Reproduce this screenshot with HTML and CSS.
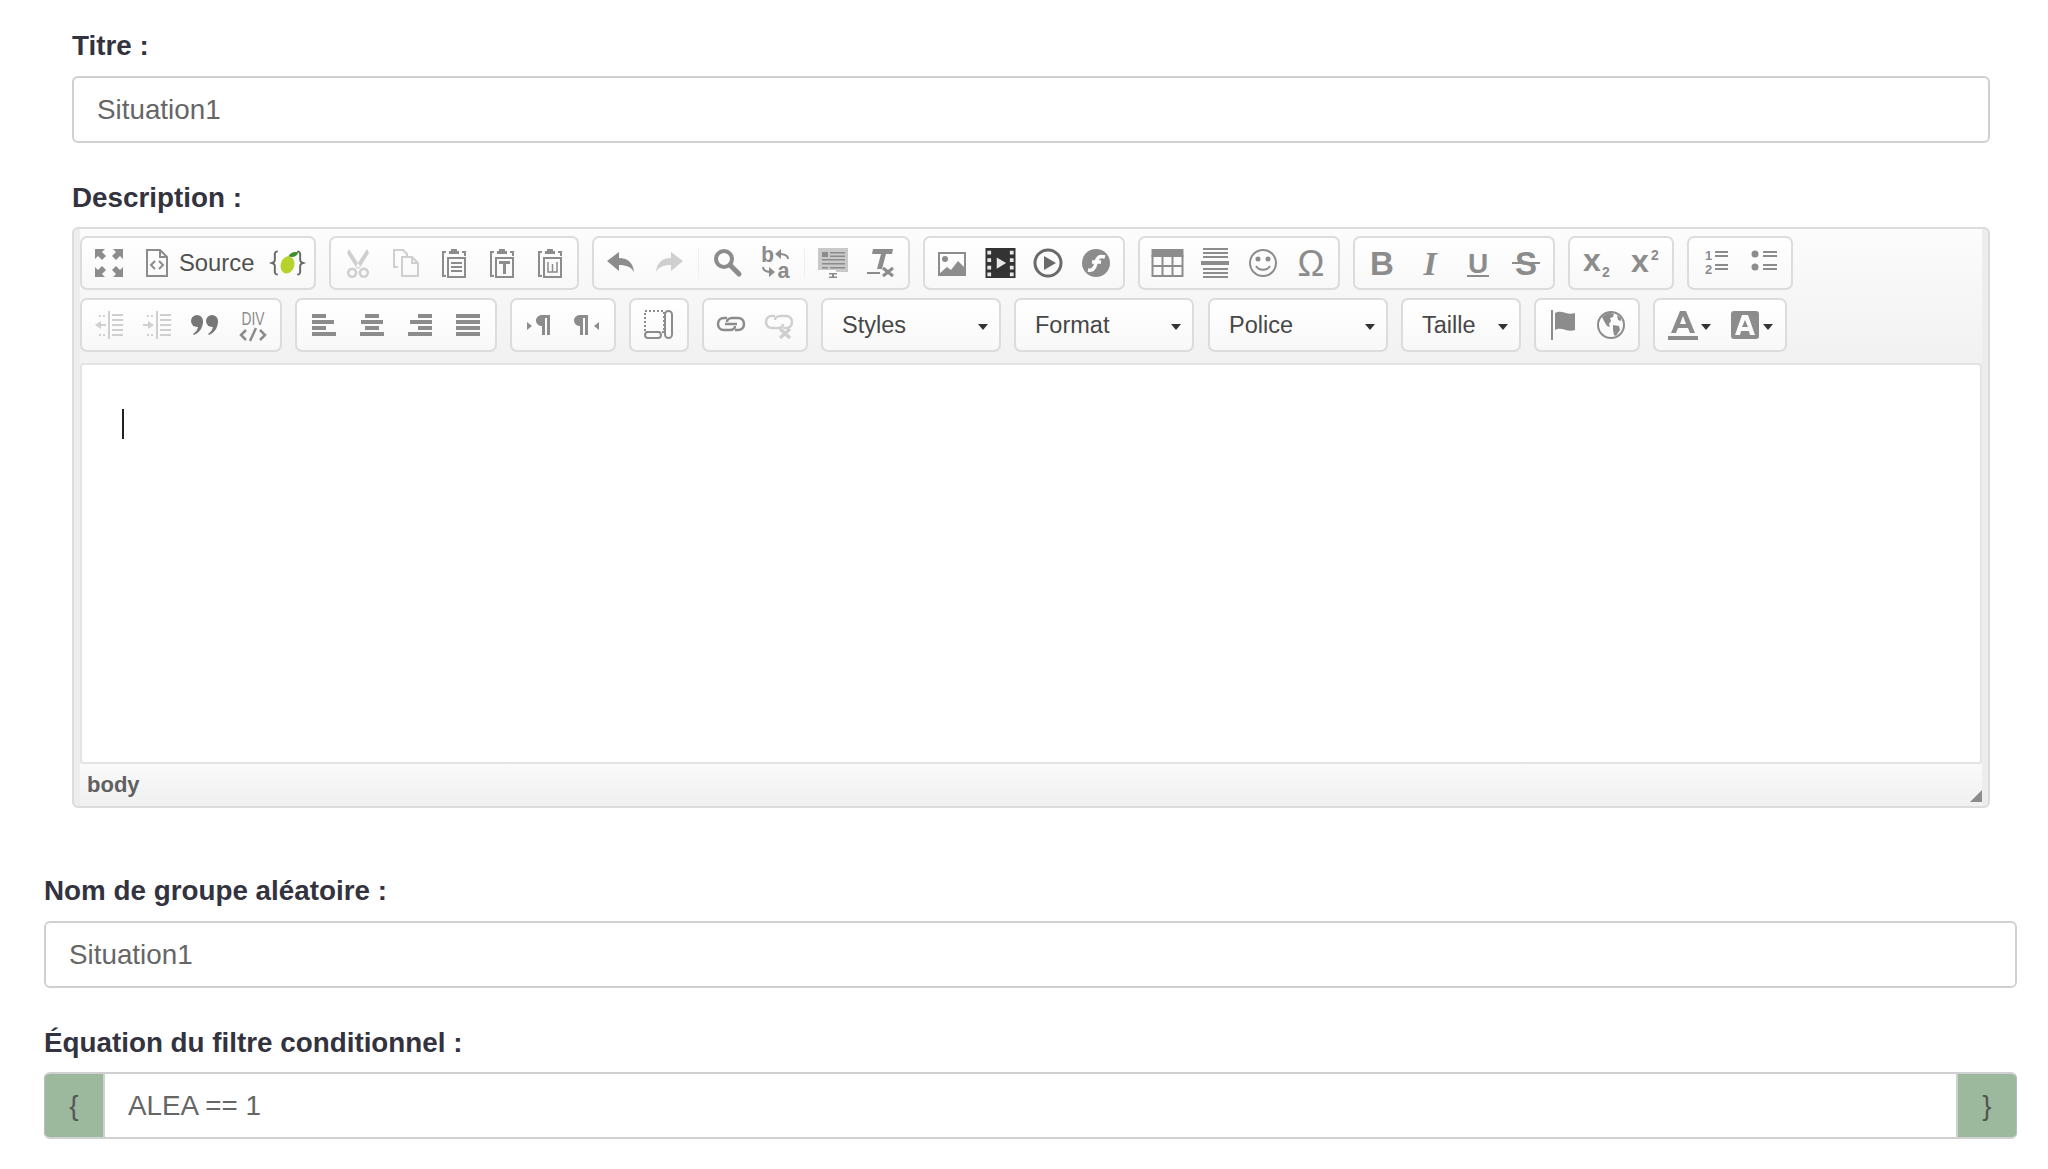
FILE: index.html
```html
<!DOCTYPE html>
<html lang="fr">
<head>
    <meta charset="UTF-8">
    <meta name="viewport" content="width=device-width, initial-scale=1.0">
    <title>Situation</title>
    <link rel="stylesheet" href="styles.css">
</head>
<body>
    <div class="inner">
        <label class="lbl">Titre :</label>
        <input class="field" type="text" value="Situation1">

        <label class="lbl">Description :</label>
        <div class="editor">
            <div class="toolbar">
                <div class="row">
                    <div class="grp">
                        <span class="btn"><svg class="ic" viewBox="0 0 30 30"><path d="M1 1h10l-3 3 4 4-4 4-4-4-3 3zM29 1v10l-3-3-4 4-4-4 4-4-3-3zM1 29V19l3 3 4-4 4 4-4 4 3 3zM29 29H19l3-3-4-4 4-4 4 4 3-3z"/></svg></span>
                        <span class="btn btn-src"><svg class="ic" viewBox="0 0 30 30"><path class="ln" stroke-width="2" d="M5 2h13l7 7v19H5zM18 2v7h7"/><path class="ln" stroke-width="2" d="M13 13l-4 4 4 4M17 13l4 4-4 4"/></svg><span class="src-txt">Source</span></span>
                        <span class="btn"><svg class="ic-w" viewBox="0 0 34 30"><path class="ln dark" stroke-width="2" d="M7 3C3 3 4 7 4 10s0 4-3 5c3 1 3 2 3 5s-1 7 3 7M27 3c4 0 3 4 3 7s0 4 3 5c-3 1-3 2-3 5s1 7-3 7"/><ellipse class="lime" cx="17" cy="17" rx="7" ry="9" transform="rotate(18 17 17)"/><path class="leaf" d="M18 8c2-4 6-5 10-4-1 4-5 6-10 4z"/></svg></span>
                    </div>
                    <div class="grp off">
                        <span class="btn"><svg class="ic" viewBox="0 0 30 30"><path d="M6 1l11 17-3 3L4 5zM24 1L13 18l3 3L26 5z"/><path class="ln" stroke-width="2.5" d="M12 22a4 4 0 1 1-.1-.1zM18 22a4 4 0 1 0 .1-.1z"/></svg></span>
                        <span class="btn"><svg class="ic" viewBox="0 0 30 30"><path class="ln" stroke-width="2" d="M7 19H3V2h9l4 4v3M11 9h10l6 6v13H11zM21 9v6h6"/></svg></span>
                        <span class="btn"><svg class="ic" viewBox="0 0 30 30"><g class="on"><path d="M10 3h2V1h6v2h2v3H10z"/><path class="ln" stroke-width="2" d="M7 4H4v24h3M23 4h3v4"/><path class="ln" stroke-width="2" d="M9 10h17v19H9z"/><path d="M12 14h11v2H12zM12 18h11v2H12zM12 22h11v2H12z"/></g></svg></span>
                        <span class="btn"><svg class="ic" viewBox="0 0 30 30"><g class="on"><path d="M10 3h2V1h6v2h2v3H10z"/><path class="ln" stroke-width="2" d="M7 4H4v24h3M23 4h3v4"/><path class="ln" stroke-width="2" d="M9 10h17v19H9z"/><path d="M12 13h11v3h-4v10h-3V16h-4z"/></g></svg></span>
                        <span class="btn"><svg class="ic" viewBox="0 0 30 30"><g class="on"><path d="M10 3h2V1h6v2h2v3H10z"/><path class="ln" stroke-width="2" d="M7 4H4v24h3M23 4h3v4"/><path class="ln" stroke-width="2" d="M9 10h17v19H9z"/><path class="ln" stroke-width="1.5" d="M13 14v10h9V14M17.500 16v8"/></g></svg></span>
                    </div>
                    <div class="grp">
                        <span class="btn"><svg class="ic" viewBox="0 0 30 30"><path d="M1 13L13 4v6c8 0 14 4 15 14-3-5-7-7-15-7v6z"/></svg></span>
                        <span class="btn off"><svg class="ic" viewBox="0 0 30 30"><path d="M29 13L17 4v6C9 10 3 14 2 24c3-5 7-7 15-7v6z"/></svg></span>
                        <span class="sep"></span>
                        <span class="btn"><svg class="ic" viewBox="0 0 30 30"><circle class="ln" stroke-width="4" cx="12" cy="11" r="8"/><path class="ln" stroke-width="5" stroke-linecap="round" d="M18 17l9 9"/></svg></span>
                        <span class="btn"><svg class="ic" viewBox="0 0 30 30"><text class="g g-ba" x="1" y="14">b</text><text class="g g-ba" x="17" y="30">a</text><path class="ln" stroke-width="2" d="M28 11c0-4-3-5-9-5M3 19c0 4 3 5 9 5"/><path d="M21 1v10l-6-5zM9 19v10l6-5z"/></svg></span>
                        <span class="sep"></span>
                        <span class="btn"><svg class="ic" viewBox="0 0 30 30"><path class="soft" d="M0 0h30v24H18v-2H0z"/><path d="M4 4h6v5H4zM12 4h15v1.500H12zM12 7.500h15V9H12zM4 11h23v1.500H4zM4 15h23v1.500H4zM4 19h6v1.500H4zM12 19h15v1.500H12zM11 25h8v1.500h-3v2h3V30h-8v-1.500h3v-2h-3z"/></svg></span>
                        <span class="btn"><svg class="ic" viewBox="0 0 30 30"><path d="M7 1h20l-1 5h-6l-4 15h-5l4-15H6zM1 24h13v2H1z"/><path class="ln" stroke-width="3" d="M17 20l10 8M27 20l-10 8"/></svg></span>
                    </div>
                    <div class="grp">
                        <span class="btn"><svg class="ic" viewBox="0 0 30 30"><path class="ln" stroke-width="2" d="M2 5h26v22H2z"/><circle cx="8" cy="11" r="3"/><path d="M2 26l8-7 4 3 7-9 8 8v6z"/></svg></span>
                        <span class="btn"><svg class="ic-w" viewBox="0 0 34 32"><path class="film" d="M1 0h32v32H1z"/><path class="holes" d="M3 3h4v4H3zM3 11h4v4H3zM3 19h4v4H3zM3 26h4v4H3zM27 3h4v4h-4zM27 11h4v4h-4zM27 19h4v4h-4zM27 26h4v4h-4zM13 10l10 6-10 6z"/></svg></span>
                        <span class="btn"><svg class="ic" viewBox="0 0 30 30"><g class="darker"><circle class="ln" stroke-width="3" cx="15" cy="15" r="13"/><path d="M11 8l12 7-12 7z"/></g></svg></span>
                        <span class="btn"><svg class="ic" viewBox="0 0 30 30"><circle cx="15" cy="15" r="14"/><path class="ln white" stroke-width="3.500" d="M24 9c-6-2-8 1-9 6s-3 8-8 7M11 14h9"/></svg></span>
                    </div>
                    <div class="grp">
                        <span class="btn"><svg class="ic-w" viewBox="0 0 32 30"><path d="M0 1h32v8H0z"/><path class="ln" stroke-width="2" d="M1 8h30v20H1zM11 8v20M21 8v20M1 18h30"/></svg></span>
                        <span class="btn"><svg class="ic" viewBox="0 0 30 30"><path d="M3 0h25v2H3zM3 4h25v2H3zM3 8h25v2H3zM1 13h28v4H1zM3 20h25v2H3zM3 24h25v2H3zM3 28h25v2H3z"/></svg></span>
                        <span class="btn"><svg class="ic" viewBox="0 0 30 30"><circle class="ln" stroke-width="2" cx="15" cy="15" r="13"/><circle cx="10" cy="11" r="2.500"/><circle cx="20" cy="11" r="2.500"/><path class="ln" stroke-width="2" d="M8 18c3 5 11 5 14 0"/></svg></span>
                        <span class="btn"><svg class="ic" viewBox="0 0 30 30"><text class="g g-omega" x="15" y="28" text-anchor="middle">Ω</text></svg></span>
                    </div>
                    <div class="grp">
                        <span class="btn"><svg class="ic" viewBox="0 0 30 30"><text class="g g-b" x="15" y="27" text-anchor="middle">B</text></svg></span>
                        <span class="btn"><svg class="ic" viewBox="0 0 30 30"><text class="g g-i" x="15" y="27" text-anchor="middle">I</text></svg></span>
                        <span class="btn"><svg class="ic" viewBox="0 0 30 30"><text class="g g-u" x="15" y="25" text-anchor="middle">U</text><path d="M4 27h22v2H4z"/></svg></span>
                        <span class="btn"><svg class="ic" viewBox="0 0 30 30"><text class="g g-b" x="15" y="27" text-anchor="middle">S</text><path d="M1 14h28v2H1z"/></svg></span>
                    </div>
                    <div class="grp">
                        <span class="btn"><svg class="ic" viewBox="0 0 30 30"><text class="g g-x" x="1" y="23">x</text><text class="g g-sm" x="20" y="29">2</text></svg></span>
                        <span class="btn"><svg class="ic" viewBox="0 0 30 30"><text class="g g-x" x="1" y="24">x</text><text class="g g-sm" x="21" y="12">2</text></svg></span>
                    </div>
                    <div class="grp">
                        <span class="btn"><svg class="ic" viewBox="0 0 30 30"><text class="g g-n" x="4" y="12">1</text><text class="g g-n" x="4" y="26">2</text><path d="M14 3h13v2H14zM14 7h13v2H14zM14 16h13v2H14zM14 20h13v2H14z"/></svg></span>
                        <span class="btn"><svg class="ic" viewBox="0 0 30 30"><circle cx="6" cy="6" r="3.500"/><circle cx="6" cy="19" r="3.500"/><path d="M14 3h14v2H14zM14 7h14v2H14zM14 16h14v2H14zM14 20h14v2H14z"/></svg></span>
                    </div>
                </div>
                <div class="row">
                    <div class="grp">
                        <span class="btn off"><svg class="ic" viewBox="0 0 30 30"><path d="M14 1h2v28h-2zM18 4h11v2H18zM18 9h11v2H18zM18 14h11v2H18zM18 19h11v2H18zM18 24h11v2H18zM1 15l6-4v3h5v2H7v3zM5 5h2v2H5zM9 5h2v2H9zM5 24h2v2H5zM9 24h2v2H9z"/></svg></span>
                        <span class="btn off"><svg class="ic" viewBox="0 0 30 30"><path d="M14 1h2v28h-2zM18 4h11v2H18zM18 9h11v2H18zM18 14h11v2H18zM18 19h11v2H18zM18 24h11v2H18zM12 15l-6-4v3H1v2h5v3zM5 5h2v2H5zM9 5h2v2H9zM5 24h2v2H5zM9 24h2v2H9z"/></svg></span>
                        <span class="btn"><svg class="ic" viewBox="0 0 30 30"><g class="dim"><circle cx="7" cy="11" r="6"/><circle cx="22" cy="11" r="6"/><path d="M13 11c0 7-4 12-9 14l-1-1c3-2 5-5 5-8zM28 11c0 7-4 12-9 14l-1-1c3-2 5-5 5-8z"/></g></svg></span>
                        <span class="btn"><svg class="ic" viewBox="0 0 30 30"><text class="g g-div" x="15" y="15" text-anchor="middle" textLength="23" lengthAdjust="spacingAndGlyphs">DIV</text><path class="ln" stroke-width="2.500" d="M8 20l-5 5 5 5M22 20l5 5-5 5M18 18l-6 13"/></svg></span>
                    </div>
                    <div class="grp">
                        <span class="btn"><svg class="ic" viewBox="0 0 30 30"><path d="M3 4h14v4H3zM3 10h22v4H3zM3 16h14v4H3zM3 22h24v4H3z"/></svg></span>
                        <span class="btn"><svg class="ic" viewBox="0 0 30 30"><path d="M8 4h14v4H8zM4 10h22v4H4zM8 16h14v4H8zM3 22h24v4H3z"/></svg></span>
                        <span class="btn"><svg class="ic" viewBox="0 0 30 30"><path d="M13 4h14v4H13zM5 10h22v4H5zM13 16h14v4H13zM3 22h24v4H3z"/></svg></span>
                        <span class="btn"><svg class="ic" viewBox="0 0 30 30"><path d="M3 4h24v4H3zM3 10h24v4H3zM3 16h24v4H3zM3 22h24v4H3z"/></svg></span>
                    </div>
                    <div class="grp">
                        <span class="btn"><svg class="ic" viewBox="0 0 30 30"><path d="M3 12l5 4-5 4zM19 5c-4 0-7 2-7 5.500s3 5.500 6 5.500v9h3V8h2v17h3V5z"/></svg></span>
                        <span class="btn"><svg class="ic" viewBox="0 0 30 30"><path d="M27 12l-5 4 5 4zM9 5c-4 0-7 2-7 5.500S5 16 8 16v9h3V8h2v17h3V5z"/></svg></span>
                    </div>
                    <div class="grp grp-one">
                        <span class="btn"><svg class="ic" viewBox="0 0 30 30"><path class="ln" stroke-width="2" stroke-dasharray="2 2" d="M1 1h19v21H1z"/><rect class="ln" stroke-width="2" x="21" y="1" width="7" height="27" rx="3.500"/><rect class="ln" stroke-width="2" x="1" y="22" width="16" height="6" rx="3"/></svg></span>
                    </div>
                    <div class="grp">
                        <span class="btn"><svg class="ic" viewBox="0 0 30 30"><path class="ln" stroke-width="2.500" d="M11 8H8c-4 0-6 3-6 6s2 6 6 6h6c3 0 5-2 5-4M19 20h3c4 0 6-3 6-6s-2-6-6-6h-6c-3 0-5 2-5 4"/><path class="ln" stroke-width="2.500" d="M9 14h12"/></svg></span>
                        <span class="btn off"><svg class="ic" viewBox="0 0 30 30"><path class="ln" stroke-width="2.500" d="M11 6H8c-4 0-6 3-6 6s2 6 6 6h6c3 0 5-2 5-4M19 18h3c4 0 6-3 6-6s-2-6-6-6h-6c-3 0-5 2-5 4"/><path class="ln" stroke-width="3.500" d="M16 19l10 9M26 19l-10 9"/></svg></span>
                    </div>
                    <div class="combo combo-lg"><span>Styles</span><i class="caret"></i></div>
                    <div class="combo combo-lg"><span>Format</span><i class="caret"></i></div>
                    <div class="combo combo-lg combo-police"><span>Police</span><i class="caret"></i></div>
                    <div class="combo combo-sm"><span>Taille</span><i class="caret"></i></div>
                    <div class="grp">
                        <span class="btn"><svg class="ic" viewBox="0 0 30 30"><path d="M3 0h2v30H3zM7 3c7-4 12 3 20 0v17c-8 3-13-4-20 0z"/></svg></span>
                        <span class="btn"><svg class="ic" viewBox="0 0 30 30"><circle class="ln" stroke-width="2" cx="15" cy="15" r="13"/><path d="M6 7c4-4 9-5 12-3l-1 3-3 1 1 3-2 3 1 3-3-1-3-5zM17 15l6 1 1 4-4 6-2-1-1-5zM21 5l4 3v3l-3-1z"/></svg></span>
                    </div>
                    <div class="grp">
                        <span class="btn btn-col"><svg class="ic" viewBox="0 0 30 30"><path d="M12 1h6l9 22h-5l-2-5H10l-2 5H3zM15 6l-3 8h6zM0 26h30v4H0z"/></svg><i class="caret caret-col"></i></span>
                        <span class="btn btn-col"><svg class="ic" viewBox="0 0 30 30"><path fill-rule="evenodd" d="M4 1h22a3 3 0 0 1 3 3v22a3 3 0 0 1-3 3H4a3 3 0 0 1-3-3V4a3 3 0 0 1 3-3zM12 5L5 25h5l1-4h8l1 4h5L18 5zM15 10l3 7h-6z"/></svg><i class="caret caret-col"></i></span>
                    </div>
                </div>
            </div>
            <div class="content"><span class="cursor"></span></div>
            <div class="status"><b>body</b><span class="resize"></span></div>
        </div>
    </div>

    <div class="outer">
        <label class="lbl">Nom de groupe aléatoire :</label>
        <input class="field" type="text" value="Situation1">

        <label class="lbl lbl-tight">Équation du filtre conditionnel :</label>
        <div class="input-group">
            <span class="addon addon-l">{</span>
            <input class="field field-mid" type="text" value="ALEA == 1">
            <span class="addon addon-r">}</span>
        </div>
    </div>
</body>
</html>
```

FILE: styles.css
```css
* {
    box-sizing: border-box;
}

body {
    margin: 0;
    font-family: "Liberation Sans", Arial, sans-serif;
    background: #fff;
    overflow: hidden;
}

.inner {
    padding: 29px 58px 0 72px;
}

.outer {
    padding: 66px 31px 0 44px;
}

.lbl {
    display: block;
    font-size: 27.8px;
    line-height: 34px;
    font-weight: bold;
    color: #333340;
    margin-bottom: 13px;
}

.lbl-tight {
    margin-bottom: 12px;
}

.field {
    display: block;
    width: 100%;
    height: 67px;
    padding: 0 23px;
    margin-bottom: 38px;
    border: 2px solid #d0d0d0;
    border-radius: 6px;
    font-family: inherit;
    font-size: 27.8px;
    color: #666;
    background: #fff;
    outline: none;
}

.field + .lbl + .editor {
    margin-top: -1px;
}

.input-group {
    display: flex;
    height: 67px;
}

.field-mid {
    flex: 1;
    margin: 0;
    border-radius: 0;
    border-left: 0;
    border-right: 0;
}

.addon {
    width: 61px;
    display: flex;
    align-items: center;
    justify-content: center;
    background: #9db99d;
    border: 2px solid #d0d0d0;
    font-size: 27.8px;
    color: #555;
}

.addon-l {
    border-radius: 6px 0 0 6px;
    border-width: 2px 2px 2px 0;
    border-left: 1px solid #bbb;
}

.addon-r {
    border-radius: 0 6px 6px 0;
    border-width: 2px 0 2px 2px;
    border-right: 1px solid #bbb;
}

/* editor */
.editor {
    height: 581px;
    border: 2px solid #dcdcdc;
    border-radius: 6px;
    background: #ededed;
    display: flex;
    flex-direction: column;
    padding: 0 6px;
}

.toolbar {
    padding: 7px 0 0 0;
    height: 134px;
    background: linear-gradient(to bottom, #fcfcfc 0, #f1f1f1 100%);
}

.row {
    display: flex;
    gap: 13px;
    margin-bottom: 8px;
}

.grp {
    display: flex;
    align-items: center;
    height: 54px;
    padding: 0 3px;
    border: 2px solid #dcdcdc;
    border-radius: 7px;
    background: linear-gradient(to bottom, #fff, #f8f8f8);
    color: #8c8c8c;
}

.grp-one {
    padding: 0 4px;
}

.off {
    color: #cfcfcf;
}

.on {
    color: #8c8c8c;
}

.btn {
    width: 48px;
    height: 50px;
    display: flex;
    align-items: center;
    justify-content: center;
    flex: none;
}

.btn-src {
    width: 130px;
    justify-content: flex-start;
    padding-left: 9px;
}

.src-txt {
    margin-left: 7px;
    font-size: 23.8px;
    color: #505050;
}

.btn-col {
    width: 62px;
}

.sep {
    width: 10px;
    height: 30px;
    flex: none;
    background: linear-gradient(#f0f0f0, #f0f0f0) center / 1px 100% no-repeat;
}

.ic,
.ic-w {
    display: block;
    flex: none;
    width: 30px;
    height: 30px;
    fill: currentColor;
    overflow: visible;
}

.ic-w {
    width: 33px;
}

.ln {
    fill: none;
    stroke: currentColor;
}

.dark {
    stroke: #666;
}

.lime {
    fill: #b5d32c;
}

.leaf {
    fill: #3f8f2b;
}

.soft {
    fill: #c9c9c9;
}

.film {
    fill: #333;
}

.holes {
    fill: #e8e8e8;
}

.darker {
    color: #6a6a6a;
}

.dim {
    color: #777;
    fill: #777;
}

.white {
    stroke: #fff;
}

.g {
    font-family: "Liberation Sans", Arial, sans-serif;
}

.g-omega {
    font-size: 36px;
}

.g-b {
    font-size: 33px;
    font-weight: bold;
}

.g-i {
    font-family: "Liberation Serif", serif;
    font-size: 34px;
    font-weight: bold;
    font-style: italic;
}

.g-u {
    font-size: 28px;
    font-weight: bold;
}

.g-x {
    font-size: 32px;
    font-weight: bold;
}

.g-sm {
    font-size: 14px;
    font-weight: bold;
}

.g-n {
    font-size: 13px;
    font-weight: bold;
}

.g-ba {
    font-family: "Liberation Mono", monospace;
    font-size: 22px;
    font-weight: bold;
}

.g-div {
    font-size: 18px;
}

.combo {
    height: 54px;
    flex: none;
    display: flex;
    align-items: center;
    justify-content: space-between;
    padding: 0 11px 0 19px;
    border: 2px solid #dcdcdc;
    border-radius: 7px;
    background: linear-gradient(to bottom, #fff, #f8f8f8);
    font-size: 23.5px;
    color: #474747;
}

.combo-lg {
    width: 180px;
}

.combo-sm {
    width: 120px;
}

.combo-police {
    margin-left: 1px;
}

.caret {
    display: block;
    width: 0;
    height: 0;
    border-style: solid;
    border-width: 6px 5.5px 0;
    border-color: #333 transparent transparent;
    margin-top: 3px;
}

.caret-col {
    margin-left: 3px;
}

.content {
    height: 401px;
    padding: 44px 0 0 40px;
    background: #fff;
    border: 2px solid #e4e4e4;
    border-radius: 4px;
    flex: none;
}

.cursor {
    display: block;
    width: 2px;
    height: 30px;
    background: #222;
}

.status {
    position: relative;
    flex: 1;
    display: flex;
    align-items: center;
    padding-left: 7px;
    font-size: 22px;
    color: #606060;
    background: linear-gradient(to bottom, #fafafa, #f0f0f0);
}

.resize {
    position: absolute;
    right: 0;
    bottom: 4px;
    width: 0;
    height: 0;
    border-style: solid;
    border-width: 0 0 12px 12px;
    border-color: transparent transparent #8c8c8c;
}
```
